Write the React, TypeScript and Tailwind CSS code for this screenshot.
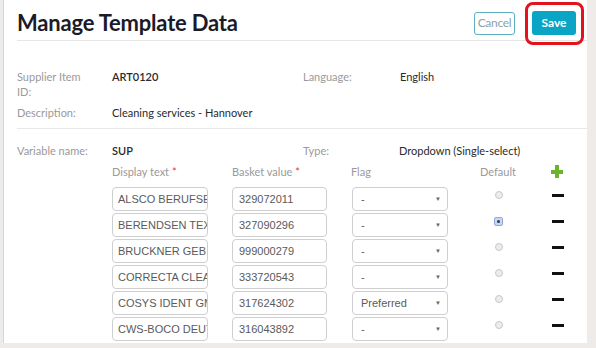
import React from "react";

const rows = [
  { d: "ALSCO BERUFSE", b: "329072011", f: "-", checked: false },
  { d: "BERENDSEN TEX", b: "327090296", f: "-", checked: true },
  { d: "BRUCKNER GEB", b: "999000279", f: "-", checked: false },
  { d: "CORRECTA CLEA", b: "333720543", f: "-", checked: false },
  { d: "COSYS IDENT GM", b: "317624302", f: "Preferred", checked: false },
  { d: "CWS-BOCO DEUT", b: "316043892", f: "-", checked: false },
  { d: "", b: "", f: "-", checked: false },
];

const lato = { fontFamily: "Lato, 'Open Sans', sans-serif" } as const;
const arial = { fontFamily: "'Liberation Sans', Arial, sans-serif" } as const;

function Radio({ checked }: { checked: boolean }) {
  if (checked) {
    return (
      <div className="w-[9px] h-[9px] rounded-[2px] border border-[#94a8d8] bg-[#c9d6f2] flex items-center justify-center">
        <div className="w-[3px] h-[3px] rounded-full bg-[#2d3a5a]" />
      </div>
    );
  }
  return <div className="w-[8px] h-[8px] rounded-full border border-[#c9c9c9] bg-[#ececec]" />;
}

export default function App() {
  return (
    <div className="w-[596px] h-[348px] bg-[#efebe8] flex flex-col overflow-hidden" style={lato}>
      <div className="flex h-[343px] shrink-0">
        <div className="w-[4px] bg-[#ececec] border-r border-[#d6d6d6] shrink-0" />
        <div className="w-[583px] bg-white pl-[13px] flex flex-col overflow-hidden shrink-0">
          {/* header */}
          <div className="h-[41px] shrink-0 flex items-center pt-[6px] pr-[11px] border-b border-[#e6e6e6]">
            <div className="text-[22px] font-bold text-[#1b1b28] leading-none tracking-[-0.2px]">
              Manage Template Data
            </div>
            <div className="ml-auto flex items-center">
              <div className="h-[23px] w-[41px] border border-[#5cb1bf] rounded-[3px] text-[12px] text-[#8aa3a8] flex items-center justify-center tracking-[-0.3px]">
                Cancel
              </div>
              <div className="relative ml-[17px]">
                <div className="h-[24px] w-[44px] bg-[#0aa4c4] rounded-[3px] text-[12px] text-white font-bold flex items-center justify-center">
                  Save
                </div>
                <div className="absolute left-[-7px] right-[-8px] top-[-9px] bottom-[-10px] border-[3px] border-[#e4131b] rounded-[8px]" />
              </div>
            </div>
          </div>

          {/* info */}
          <div className="pt-[28px] pb-[8px] border-b border-[#e8e8e8] shrink-0 text-[11px] leading-[15px]">
            <div className="flex">
              <div className="w-[95px] pr-[20px] text-[#9a9a9a] shrink-0">Supplier Item ID:</div>
              <div className="w-[191px] text-[#2a2a2a] font-semibold shrink-0">ART0120</div>
              <div className="w-[97px] text-[#9a9a9a] shrink-0">Language:</div>
              <div className="text-[#2a2a2a]">English</div>
            </div>
            <div className="flex mt-[6px]">
              <div className="w-[95px] text-[#9a9a9a] shrink-0">Description:</div>
              <div className="text-[#2a2a2a]">Cleaning services - Hannover</div>
            </div>
          </div>

          {/* variable */}
          <div className="pt-[14px] text-[11px] leading-[15px] shrink-0">
            <div className="flex">
              <div className="w-[95px] text-[#9a9a9a] shrink-0">Variable name:</div>
              <div className="w-[191px] text-[#2a2a2a] font-semibold shrink-0">SUP</div>
              <div className="w-[96px] text-[#9a9a9a] shrink-0">Type:</div>
              <div className="text-[#2a2a2a]">Dropdown (Single-select)</div>
            </div>
            <div className="flex items-center mt-[6px] text-[#9a9a9a]">
              <div className="w-[95px] shrink-0" />
              <div className="w-[120px] shrink-0">
                Display text <span className="text-[#e2393f]">*</span>
              </div>
              <div className="w-[119px] shrink-0">
                Basket value <span className="text-[#e2393f]">*</span>
              </div>
              <div className="w-[96px] shrink-0">Flag</div>
              <div className="w-[100px] shrink-0 text-center pl-[2px]">Default</div>
              <div className="w-[12px] ml-[4px] h-[13px] relative shrink-0">
                <div className="absolute left-0 right-0 top-[5px] h-[4px] bg-[#6cb42e]" />
                <div className="absolute top-0 bottom-0 left-[4px] w-[4px] bg-[#6cb42e]" />
              </div>
            </div>
          </div>

          {/* rows */}
          <div className="mt-[8px] flex flex-col gap-[2px]" style={arial}>
            {rows.map((r, i) => (
              <div key={i} className="flex h-[24px] shrink-0">
                <div className="w-[95px] shrink-0" />
                <div className="w-[96px] h-[24px] shrink-0 border border-[#cfcfcf] rounded-[4px] pl-[5px] flex items-center overflow-hidden whitespace-nowrap text-[11px] text-[#5a5a5a]">
                  {r.d}
                </div>
                <div className="w-[95px] h-[24px] ml-[24px] shrink-0 border border-[#cfcfcf] rounded-[4px] pl-[6px] flex items-center overflow-hidden whitespace-nowrap text-[11px] text-[#5a5a5a]">
                  {r.b}
                </div>
                <div className="w-[96px] h-[24px] ml-[25px] shrink-0 border border-[#cfcfcf] rounded-[4px] pl-[8px] pr-[6px] flex items-center text-[11px] text-[#5a5a5a]">
                  <span>{i < 6 ? r.f : ""}</span>
                  <span className="ml-auto text-[6px] text-[#666]">▼</span>
                </div>
                <div className="w-[100px] shrink-0 flex justify-center pt-[4px] pl-[1px]">
                  {i < 6 && <Radio checked={r.checked} />}
                </div>
                <div className="w-[12px] ml-[4px] shrink-0 pt-[7px]">
                  {i < 6 && <div className="h-[3px] w-[12px] bg-[#111]" />}
                </div>
              </div>
            ))}
          </div>
        </div>
        <div className="flex-1 bg-[#efebe8]" />
      </div>
      <div className="flex-1 bg-[#eeebe8]" />
    </div>
  );
}
